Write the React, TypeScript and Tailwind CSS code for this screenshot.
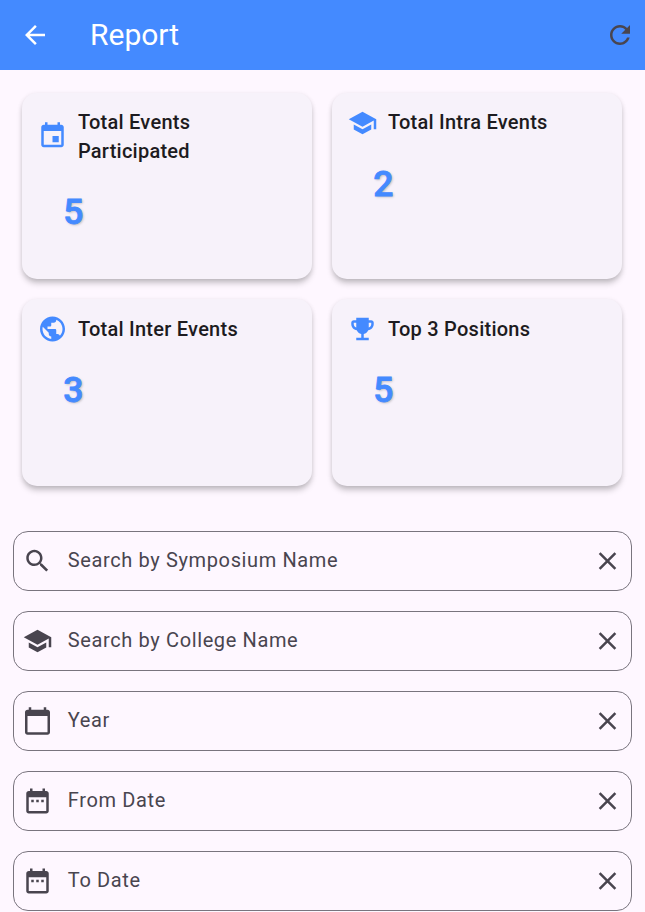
import React from 'react';

const paths = {
  back: 'M20 11H7.83l5.59-5.59L12 4l-8 8 8 8 1.41-1.41L7.83 13H20v-2z',
  refresh:
    'M17.65 6.35C16.2 4.9 14.21 4 12 4c-4.42 0-7.99 3.58-7.99 8s3.57 8 7.99 8c3.73 0 6.84-2.55 7.73-6h-2.08c-.82 2.33-3.04 4-5.65 4-3.31 0-6-2.69-6-6s2.69-6 6-6c1.66 0 3.14.69 4.22 1.78L13 11h7V4l-2.35 2.35z',
  event:
    'M17 12h-5v5h5v-5zM16 1v2H8V1H6v2H5c-1.11 0-1.99.9-1.99 2L3 19c0 1.1.89 2 2 2h14c1.1 0 2-.9 2-2V5c0-1.1-.9-2-2-2h-1V1h-2zm3 18H5V8h14v11z',
  school: 'M5 13.18v4L12 21l7-3.82v-4L12 17l-7-3.82zM12 3L1 9l11 6 9-4.91V17h2V9L12 3z',
  globe:
    'M12 2C6.48 2 2 6.48 2 12s4.48 10 10 10 10-4.48 10-10S17.52 2 12 2zm-1 17.93c-3.95-.49-7-3.85-7-7.93 0-.62.08-1.21.21-1.79L9 15v1c0 1.1.9 2 2 2v1.93zm6.9-2.54c-.26-.81-1-1.39-1.9-1.39h-1v-3c0-.55-.45-1-1-1H8v-2h2c.55 0 1-.45 1-1V7h2c1.1 0 2-.9 2-2v-.41c2.93 1.19 5 4.06 5 7.41 0 2.08-.8 3.97-2.1 5.39z',
  trophy:
    'M19 5h-2V3H7v2H5c-1.1 0-2 .9-2 2v1c0 2.55 1.92 4.63 4.39 4.94.63 1.5 1.98 2.63 3.61 2.96V19H7v2h10v-2h-4v-3.1c1.63-.33 2.98-1.46 3.61-2.96C19.08 12.63 21 10.55 21 8V7c0-1.1-.9-2-2-2zM5 8V7h2v3.82C5.84 10.4 5 9.3 5 8zm14 0c0 1.3-.84 2.4-2 2.82V7h2v1z',
  search:
    'M15.5 14h-.79l-.28-.27C15.41 12.59 16 11.11 16 9.5 16 5.91 13.09 3 9.5 3S3 5.91 3 9.5 5.91 16 9.5 16c1.61 0 3.09-.59 4.23-1.57l.27.28v.79l5 4.99L20.49 19l-4.99-5zm-6 0C7.01 14 5 11.99 5 9.5S7.01 5 9.5 5 14 7.01 14 9.5 11.99 14 9.5 14z',
  calendar:
    'M20 3h-1V1h-2v2H7V1H5v2H4c-1.1 0-2 .9-2 2v16c0 1.1.9 2 2 2h16c1.1 0 2-.9 2-2V5c0-1.1-.9-2-2-2zm0 18H4V8h16v13z',
  range:
    'M9 11H7v2h2v-2zm4 0h-2v2h2v-2zm4 0h-2v2h2v-2zm2-7h-1V2h-2v2H8V2H6v2H5c-1.11 0-1.99.9-1.99 2L3 20c0 1.1.89 2 2 2h14c1.1 0 2-.9 2-2V6c0-1.1-.9-2-2-2zm0 16H5V9h14v11z',
  close:
    'M19 6.41L17.59 5 12 10.59 6.41 5 5 6.41 10.59 12 5 17.59 6.41 19 12 13.41 17.59 19 19 17.59 13.41 12z',
};

type IconName = keyof typeof paths;

function Icon({ name, className = '' }: { name: IconName; className?: string }) {
  return (
    <svg viewBox="0 0 24 24" fill="currentColor" className={`h-[30px] w-[31px] shrink-0 ${className}`}>
      <path d={paths[name]} />
    </svg>
  );
}

const stats: { icon: IconName; title: string; value: number }[] = [
  { icon: 'event', title: 'Total Events Participated', value: 5 },
  { icon: 'school', title: 'Total Intra Events', value: 2 },
  { icon: 'globe', title: 'Total Inter Events', value: 3 },
  { icon: 'trophy', title: 'Top 3 Positions', value: 5 },
];

const fields: { icon: IconName; label: string }[] = [
  { icon: 'search', label: 'Search by Symposium Name' },
  { icon: 'school', label: 'Search by College Name' },
  { icon: 'calendar', label: 'Year' },
  { icon: 'range', label: 'From Date' },
  { icon: 'range', label: 'To Date' },
];

export default function App() {
  return (
    <div className="h-[912px] w-[645px] overflow-hidden bg-[#fef7ff] font-[Roboto,sans-serif]">
      <header className="flex h-[70px] items-center bg-[#448aff] pr-[10px] pl-5 text-white">
        <Icon name="back" className="max-w-[30px]" />
        <h1 className="ml-10 flex-1 text-[30px] leading-[38px]">Report</h1>
        <Icon name="refresh" className="max-w-[30px] text-[#49454f]" />
      </header>

      <section className="grid grid-cols-2 gap-5 pr-[22.6px] pl-[22.4px] pt-[22.5px]">
        {stats.map((s) => (
          <div
            key={s.title}
            className="h-[186.6px] rounded-[15px] bg-[#f7f2fa] px-[15px] pt-[15px] shadow-[0_5px_6px_-1px_rgba(0,0,0,0.22),0_1px_5px_rgba(0,0,0,0.09)]"
          >
            <div className="flex items-center gap-[9.5px]">
              <Icon name={s.icon} className={`text-[#448aff] ${s.icon === 'event' ? '-mt-[2px]' : ''}`} />
              <h2 className="w-[180px] text-[20px] leading-[29px] font-medium tracking-[0.25px] text-[#1d1b20]">
                {s.title}
              </h2>
            </div>
            <p className="mt-[25.4px] pl-[25.8px] text-[35.5px] leading-[42px] font-medium text-[#448aff] [-webkit-text-stroke:0.8px_#448aff] [text-shadow:1.25px_1.25px_2.5px_rgba(0,0,0,0.26)]">
              {s.value}
            </p>
          </div>
        ))}
      </section>

      <section className="flex flex-col gap-5 pr-[13px] pl-[13px] pt-[45px]">
        {fields.map((f) => (
          <div
            key={f.label}
            className="flex h-[60px] shrink-0 items-center rounded-[15px] border border-[#79747e] pr-[8px] pl-[8px] text-[#49454f]"
          >
            <Icon name={f.icon} />
            <span className="-mt-[2px] ml-[14.8px] flex-1 text-[20px] leading-[30px] tracking-[0.625px]">{f.label}</span>
            <Icon name="close" />
          </div>
        ))}
      </section>
    </div>
  );
}
